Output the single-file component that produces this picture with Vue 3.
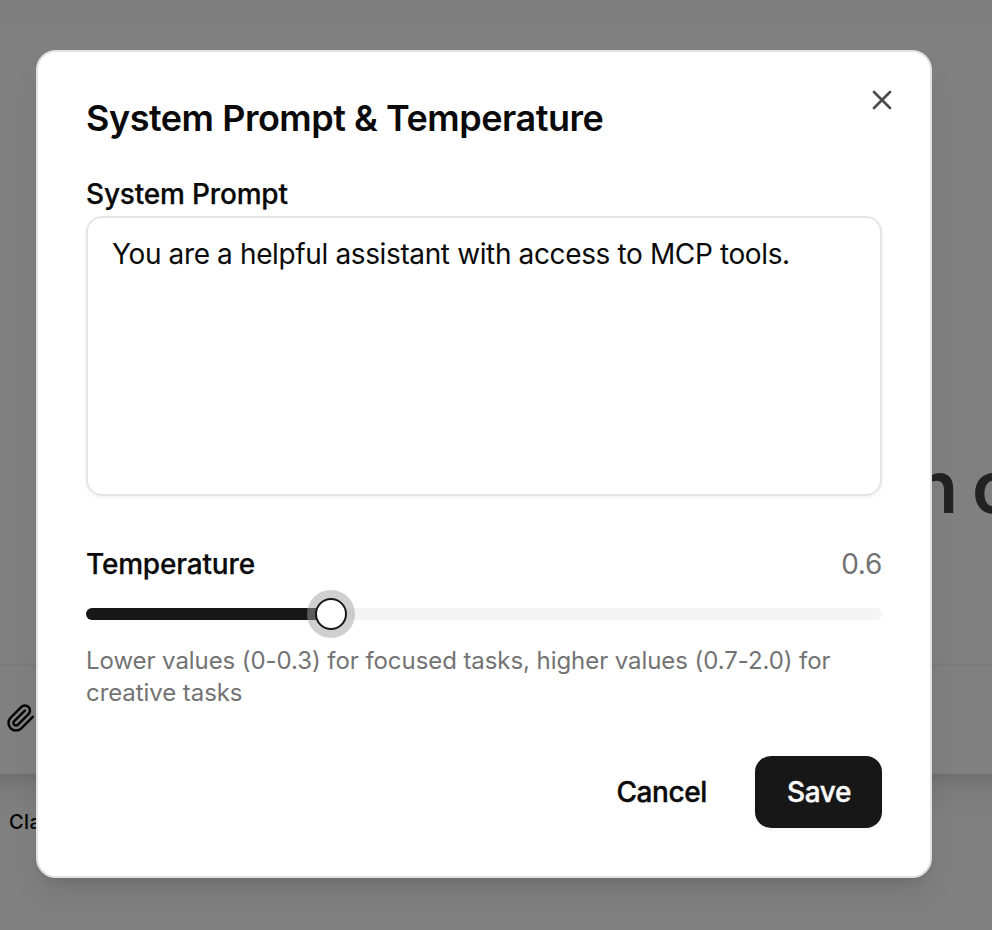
<script setup>
import { ref, computed } from 'vue'

const prompt = ref('You are a helpful assistant with access to MCP tools.')
const temperature = ref(0.6)
const thumb = computed(() => `${(temperature.value / 2) * 764 + 16}px`)
</script>

<template>
  <main class="page">
    <div class="backdrop">
      <div class="topbar"></div>
      <div class="hero"><span class="hero-a">n</span><span class="hero-b">c</span></div>
      <div class="composer">
        <svg class="clip" viewBox="0 0 24 24" fill="none" stroke="currentColor" stroke-width="2" stroke-linecap="round" stroke-linejoin="round">
          <path d="m21.44 11.05-9.19 9.19a6 6 0 0 1-8.49-8.49l8.57-8.57A4 4 0 1 1 18 8.84l-8.59 8.57a2 2 0 0 1-2.83-2.83l8.49-8.48" />
        </svg>
      </div>
      <div class="model">Cla</div>
    </div>

    <section class="dialog" role="dialog">
      <button class="close">
        <svg viewBox="0 0 24 24" fill="none" stroke="currentColor" stroke-width="2" stroke-linecap="round" stroke-linejoin="round">
          <path d="M18 6 6 18" /><path d="m6 6 12 12" />
        </svg>
      </button>
      <h2 class="title">System Prompt &amp; Temperature</h2>
      <label class="label prompt-label">System Prompt</label>
      <div class="textarea"><span class="prompt-text">{{ prompt }}</span></div>
      <div class="row">
        <label class="label temp-label">Temperature</label>
        <span class="value">{{ temperature }}</span>
      </div>
      <div class="slider">
        <div class="track"><div class="range" :style="{ width: thumb }"></div></div>
        <div class="thumb" :style="{ left: thumb }"></div>
      </div>
      <p class="hint">Lower values (0-0.3) for focused tasks, higher values (0.7-2.0) for<br>creative tasks</p>
      <div class="actions">
        <button class="btn cancel">Cancel</button>
        <button class="btn save">Save</button>
      </div>
    </section>
  </main>
</template>

<style>
body { background: #808080; }
</style>

<style scoped>
* { box-sizing: border-box; }
.page {
  position: relative;
  width: 992px;
  height: 930px;
  overflow: hidden;
  padding: 50px 60px 52px 36px;
  background: #808080;
  color: #0a0a0a;
  font-family: Inter, sans-serif;
}
.backdrop { position: absolute; inset: 0; display: flex; flex-direction: column; }
.topbar { height: 27px; background: #7f7f7f; }
.hero {
  display: flex;
  height: 637px;
  padding: 415px 0 0 914px;
  color: #222;
  font-size: 72px;
  font-weight: 600;
  line-height: 90px;
}
.hero span { flex: none; }
.hero-a { width: 58px; }
.composer {
  display: flex;
  flex: none;
  height: 110px;
  margin: 0 -60px;
  padding: 37px 0 0 66px;
  border-top: 2px solid #7b7b7b;
  background: #808080;
  box-shadow: 0 20px 30px -6px rgba(0, 0, 0, .1), 0 8px 12px -8px rgba(0, 0, 0, .1);
}
.clip { width: 30px; height: 30px; color: #050505; }
.model { padding: 33px 0 0 9px; font-size: 20px; font-weight: 500; line-height: 30px; letter-spacing: .4px; color: #050505; }
.dialog {
  position: relative;
  display: flex;
  flex-direction: column;
  width: 896px;
  height: 828px;
  padding: 48px;
  border: 2px solid #e2e2e2;
  border-radius: 20px;
  background: #fff;
  box-shadow: 0 20px 30px -6px rgba(0, 0, 0, .1), 0 8px 12px -8px rgba(0, 0, 0, .1);
}
button { border: 0; padding: 0; background: none; font-family: inherit; color: inherit; }
.close { position: absolute; top: 32px; right: 32px; width: 32px; height: 32px; color: #4c4c4c; }
.close svg { display: block; width: 32px; height: 32px; }
.title { margin: 0; font-size: 36px; font-weight: 600; line-height: 36px; letter-spacing: -.48px; white-space: nowrap; }
.label { font-size: 28px; font-weight: 500; line-height: 28px; letter-spacing: -.18px; -webkit-text-stroke: .25px currentColor; }
.prompt-label { margin: 44px 0 8px; }
.textarea {
  height: 280px;
  padding: 18px 24px;
  border: 2px solid #e5e5e5;
  border-radius: 16px;
  box-shadow: 0 2px 4px rgba(0, 0, 0, .05);
  font-size: 28px;
  line-height: 36px;
  letter-spacing: -.37px;
  white-space: nowrap;
}
.row { display: flex; justify-content: space-between; align-items: center; height: 40px; margin-top: 48px; }
.value { color: #737373; font-size: 28px; line-height: 40px; letter-spacing: -.3px; }
.slider { position: relative; margin-top: 24px; }
.track { height: 12px; overflow: hidden; border-radius: 6px; background: #f4f4f4; }
.range { height: 100%; background: #171717; }
.thumb {
  position: absolute;
  top: -10px;
  width: 32px;
  height: 32px;
  margin-left: -16px;
  border: 2px solid #171717;
  border-radius: 50%;
  background: #fff;
  box-shadow: 0 0 0 8px rgba(161, 161, 161, .5);
}
.hint { margin: 25px 0 0; color: #737373; font-size: 24px; line-height: 32px; letter-spacing: -.07px; white-space: nowrap; }
.actions { display: flex; justify-content: flex-end; gap: 16px; margin-top: auto; }
.btn { height: 72px; padding: 0 32px; border-radius: 16px; font-size: 28px; font-weight: 500; line-height: 40px; letter-spacing: -.4px; -webkit-text-stroke: .4px currentColor; }
.save { width: 127px; background: #171717; color: #fafafa; box-shadow: 0 2px 4px rgba(0, 0, 0, .05); }
</style>
